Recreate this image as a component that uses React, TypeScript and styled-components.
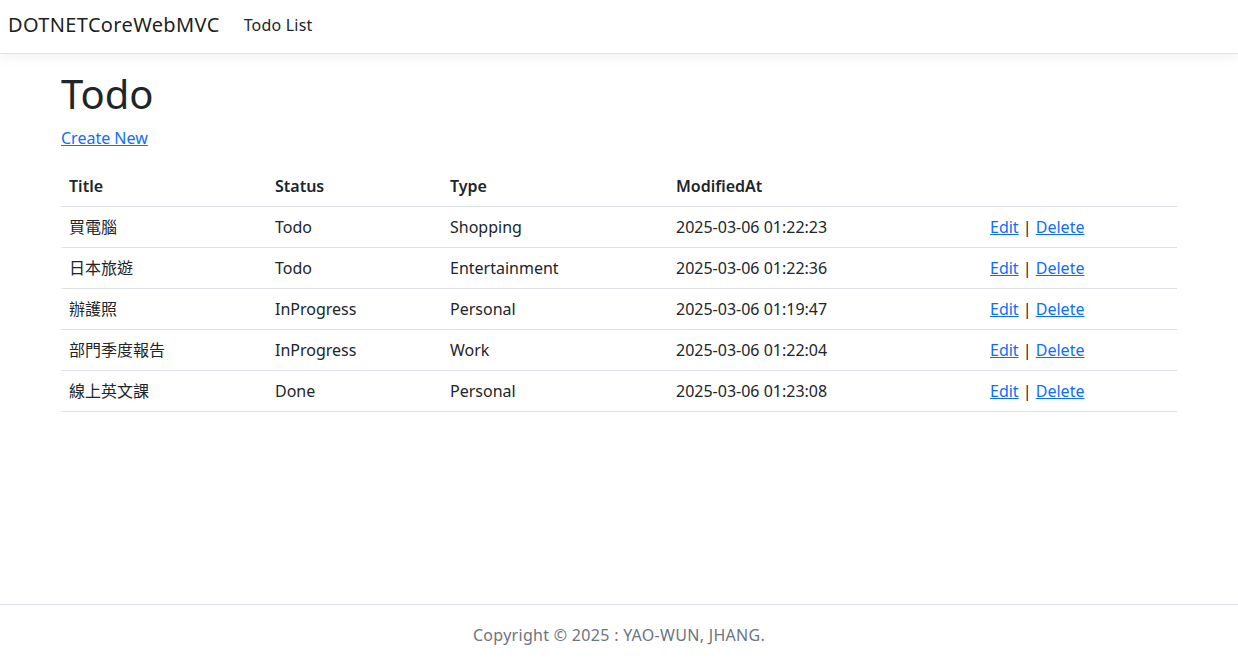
import React from "react";
import styled, { createGlobalStyle } from "styled-components";

const GlobalStyle = createGlobalStyle`
  html, body {
    margin: 0;
    padding: 0;
  }
  body {
    font-family: "Segoe UI", "Noto Sans", "Noto Sans CJK TC", sans-serif;
    font-size: 16px;
    line-height: 1.5;
    color: #212529;
    background: #fff;
  }
  * {
    box-sizing: border-box;
  }
`;

const Page = styled.div`
  display: flex;
  flex-direction: column;
  min-height: 100vh;
`;

const Navbar = styled.nav`
  display: flex;
  align-items: center;
  height: 54px;
  padding: 0 8px 4px;
  border-bottom: 1px solid #dee2e6;
  box-shadow: 0 0.25rem 0.75rem rgba(0, 0, 0, 0.05);
  margin-bottom: 16px;
`;

const Brand = styled.a`
  font-size: 20px;
  letter-spacing: 0.35px;
  color: rgba(0, 0, 0, 0.9);
  text-decoration: none;
  margin-right: 16px;
`;

const NavLink = styled.a`
  font-size: 16px;
  letter-spacing: 0.2px;
  color: #212529;
  text-decoration: none;
  padding: 8px;
`;

const Container = styled.main`
  width: 1140px;
  max-width: 100%;
  margin: 0 auto;
  padding: 0 12px;
  flex: 1;
`;

const Heading = styled.h1`
  font-size: 40px;
  font-weight: 400;
  line-height: 1.2;
  margin: 0 0 8px;
`;

const Paragraph = styled.p`
  margin: 0 0 16px;
`;

const Link = styled.a`
  color: #0d6efd;
  text-decoration: underline;
  cursor: pointer;
`;

const Table = styled.table`
  width: 100%;
  border-collapse: collapse;
  table-layout: fixed;
`;

const HeadCell = styled.th<{ $width?: number }>`
  text-align: left;
  font-weight: 600;
  padding: 8px;
  border-bottom: 1px solid #dee2e6;
  width: ${(p) => (p.$width ? `${p.$width}px` : "auto")};
`;

const Cell = styled.td`
  padding: 8px;
  border-bottom: 1px solid #dee2e6;
  white-space: nowrap;
`;

const Footer = styled.footer`
  border-top: 1px solid #dee2e6;
  color: #6c757d;
  text-align: center;
  padding-top: 4px;
  line-height: 52px;
  letter-spacing: 0.3px;
`;

const todos = [
  { title: "買電腦", status: "Todo", type: "Shopping", modifiedAt: "2025-03-06 01:22:23" },
  { title: "日本旅遊", status: "Todo", type: "Entertainment", modifiedAt: "2025-03-06 01:22:36" },
  { title: "辦護照", status: "InProgress", type: "Personal", modifiedAt: "2025-03-06 01:19:47" },
  { title: "部門季度報告", status: "InProgress", type: "Work", modifiedAt: "2025-03-06 01:22:04" },
  { title: "線上英文課", status: "Done", type: "Personal", modifiedAt: "2025-03-06 01:23:08" },
];

export default function App() {
  return (
    <Page>
      <GlobalStyle />
      <Navbar>
        <Brand>DOTNETCoreWebMVC</Brand>
        <NavLink>Todo List</NavLink>
      </Navbar>
      <Container>
        <Heading>Todo</Heading>
        <Paragraph>
          <Link>Create New</Link>
        </Paragraph>
        <Table>
          <thead>
            <tr>
              <HeadCell $width={206}>Title</HeadCell>
              <HeadCell $width={175}>Status</HeadCell>
              <HeadCell $width={226}>Type</HeadCell>
              <HeadCell $width={314}>ModifiedAt</HeadCell>
              <HeadCell></HeadCell>
            </tr>
          </thead>
          <tbody>
            {todos.map((t) => (
              <tr key={t.title}>
                <Cell>{t.title}</Cell>
                <Cell>{t.status}</Cell>
                <Cell>{t.type}</Cell>
                <Cell>{t.modifiedAt}</Cell>
                <Cell>
                  <Link>Edit</Link> | <Link>Delete</Link>
                </Cell>
              </tr>
            ))}
          </tbody>
        </Table>
      </Container>
      <Footer>Copyright © 2025 : YAO-WUN, JHANG.</Footer>
    </Page>
  );
}
